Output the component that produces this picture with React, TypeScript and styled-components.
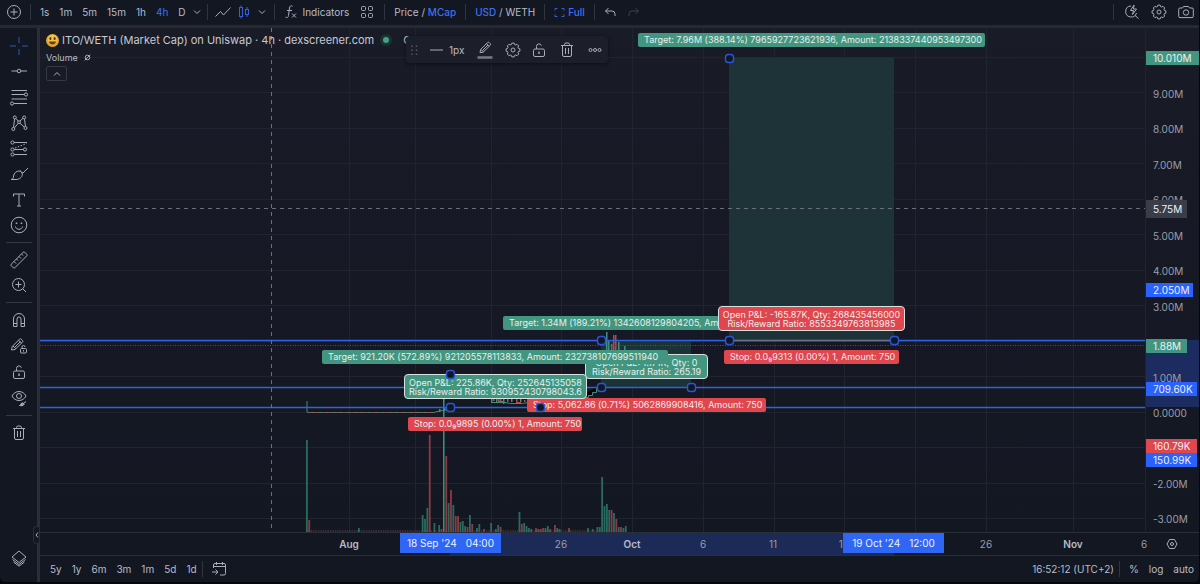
import React from "react";
import styled, { createGlobalStyle, css } from "styled-components";

const c = {
  bg: "#131722",
  line: "#2a2e39",
  text: "#b8bcc8",
  dim: "#9a9eaa",
  blue: "#2962ff",
  link: "#3f6ff0",
  green: "#42967f",
  red: "#e0464d",
};

const GlobalStyle = createGlobalStyle`
  * { box-sizing: border-box; }
  body {
    margin: 0;
    background: #05070c;
    color: ${c.text};
    font-family: Inter, "Liberation Sans", sans-serif;
    font-size: 10px;
  }
  button {
    margin: 0;
    padding: 0;
    border: 0;
    background: none;
    color: inherit;
    font: inherit;
    cursor: pointer;
  }
  svg { flex: none; }
`;

/* ---------- frame ---------- */

const Page = styled.div`
  display: flex;
  flex-direction: column;
  min-height: 100vh;
  padding: 0 1px 2px 0;
`;

const TopBar = styled.header`
  display: flex;
  align-items: flex-start;
  height: 28px;
  padding: 0 0 0 1px;
  background: ${c.bg};
  border-bottom: 3px solid #262932;
`;

const Body = styled.div`
  display: flex;
  flex: 1;
`;

const SideBar = styled.nav`
  position: relative;
  display: flex;
  flex-direction: column;
  flex: none;
  width: 40px;
  padding: 5px 0 11px;
  background: ${c.bg};
  border-right: 3px solid #2b2e38;
  border-bottom-left-radius: 5px;
`;

const Main = styled.main`
  display: flex;
  flex-direction: column;
  flex: 1;
  min-width: 0;
`;

const ChartGrid = styled.section`
  display: grid;
  grid-template-columns: 1fr 54px;
  grid-template-rows: 1fr 24px;
  flex: 1;
  background: linear-gradient(#191b27, #131722);
`;

const BottomBar = styled.footer`
  display: flex;
  align-items: center;
  height: 26px;
  padding: 0 0 0 5px;
  background: ${c.bg};
  border-bottom-right-radius: 5px;
`;

/* ---------- controls ---------- */

const BarButton = styled.button<{ $active?: boolean; $bold?: boolean }>`
  display: inline-flex;
  align-items: center;
  gap: ${(p) => (p.$bold ? 3 : 5)}px;
  height: 24px;
  padding: 0 5px;
  white-space: nowrap;
  font-size: 10px;
  font-weight: ${(p) => (p.$bold ? 500 : 400)};
  color: ${(p) => (p.$active ? c.link : c.text)};
  b {
    color: ${c.link};
    font-weight: 500;
  }
`;

const IconButton = styled.button<{ $w: number }>`
  display: flex;
  align-items: center;
  justify-content: center;
  flex: none;
  width: ${(p) => p.$w}px;
  height: 24px;
`;

const Divider = styled.span<{ $tight?: boolean }>`
  flex: none;
  width: 1px;
  height: 16px;
  margin: 0 4px 0 ${(p) => (p.$tight ? 0 : 4)}px;
  background: #30343f;
  ${TopBar} & {
    margin-top: 4px;
  }
`;

const Spacer = styled.span`
  flex: 1;
`;

const ToolGroup = styled.div<{ $h: number }>`
  display: flex;
  flex-direction: column;
  height: ${(p) => p.$h}px;
`;

const Tool = styled.button<{ $bottom?: boolean }>`
  display: flex;
  align-items: center;
  justify-content: center;
  flex: 1;
  width: 37px;
  ${(p) =>
    p.$bottom &&
    css`
      flex: none;
      height: 26px;
      margin-top: auto;
    `}
`;

const Rule = styled.hr`
  width: 26px;
  height: 1px;
  margin: 4px auto 4px 6px;
  border: 0;
  background: #343843;
`;

const CollapseTab = styled.button`
  position: absolute;
  right: -3px;
  bottom: 38px;
  width: 7px;
  height: 18px;
  background: ${c.bg};
  border: 1px solid #2b2e38;
  border-radius: 3px;
  display: flex;
  align-items: center;
  justify-content: center;
`;

/* ---------- chart ---------- */

const Pane = styled.div`
  position: relative;
  overflow: hidden;
  min-width: 0;
`;

const Plot = styled.svg`
  position: absolute;
  inset: 0;
  width: 100%;
  height: 100%;
`;

const Legend = styled.div`
  position: relative;
  padding: 4px 6px;
`;

const Title = styled.h1`
  display: flex;
  align-items: center;
  gap: 3px;
  height: 16px;
  margin: 0;
  font-size: 11px;
  font-weight: 400;
  color: #c6c9d2;
  white-space: nowrap;
`;

const Status = styled.span`
  width: 12px;
  height: 12px;
  margin: 0 8px 0 3px;
  border: 3px solid #18342f;
  border-radius: 50%;
  background: #4a9e88;
`;

const Study = styled.div`
  display: flex;
  align-items: center;
  gap: 6px;
  height: 18px;
  font-size: 9px;
`;

const Toggle = styled.button`
  display: flex;
  align-items: center;
  justify-content: center;
  width: 21px;
  height: 15px;
  border: 1px solid #343843;
  border-radius: 2px;
`;

const Floating = styled.div`
  position: absolute;
  left: 366px;
  top: 8px;
  display: flex;
  align-items: center;
  height: 27px;
  padding: 0 0 0 3px;
  background: #1c1f2a;
  border-radius: 4px;
  box-shadow: 0 1px 4px rgba(0, 0, 0, 0.5);
`;

const Tag = styled.div<{ $x: number; $y: number; $w: number; $tone: "green" | "red"; $boxed?: boolean }>`
  position: absolute;
  left: ${(p) => p.$x}px;
  top: ${(p) => p.$y}px;
  width: ${(p) => p.$w}px;
  padding: 0 6px;
  height: 14px;
  border-radius: 2px;
  background: ${(p) => c[p.$tone]};
  color: #e9eef0;
  font-size: 9px;
  line-height: 14px;
  white-space: nowrap;
  ${(p) =>
    p.$boxed &&
    css`
      height: 25px;
      padding: 3px 0;
      border: 1px solid #d9e2e0;
      border-radius: 4px;
      line-height: 9px;
      text-align: center;
    `}
`;

const PriceAxis = styled.div`
  position: relative;
  overflow: hidden;
  border-left: 1px solid #20242f;
`;

const PriceBand = styled.div`
  position: absolute;
  left: 0;
  right: 0;
  top: 312px;
  height: 67px;
  background: #1c2c60;
`;

const PriceTick = styled.span<{ $y: number }>`
  position: absolute;
  left: 7px;
  top: ${(p) => p.$y - 7}px;
  line-height: 14px;
  color: ${c.dim};
`;

const PriceTag = styled.span<{ $y: number; $bg: string; $w: number; $h?: number }>`
  position: absolute;
  left: 0;
  top: ${(p) => p.$y - (p.$h ?? 14) / 2}px;
  width: ${(p) => p.$w}px;
  height: ${(p) => p.$h ?? 14}px;
  padding-left: 7px;
  line-height: ${(p) => p.$h ?? 14}px;
  background: ${(p) => p.$bg};
  color: #eef1f6;
`;

const TimeAxis = styled.div`
  position: relative;
  z-index: 1;
  border-top: 1px solid ${c.line};
  border-bottom: 1px solid ${c.line};
  background: ${c.bg};
`;

const TimeBand = styled.div`
  position: absolute;
  left: 410px;
  top: 0;
  bottom: 0;
  width: 444px;
  background: #1c2a58;
`;

const TimeTick = styled.span<{ $x: number; $bold?: boolean }>`
  position: absolute;
  left: ${(p) => p.$x - 20}px;
  width: 40px;
  top: 0;
  line-height: 22px;
  text-align: center;
  color: ${(p) => (p.$bold ? c.text : c.dim)};
  font-weight: ${(p) => (p.$bold ? 600 : 400)};
`;

const TimeTag = styled.span<{ $x: number }>`
  position: absolute;
  left: ${(p) => p.$x}px;
  top: 0;
  display: flex;
  justify-content: center;
  gap: 9px;
  width: 101px;
  line-height: 20px;
  background: #2f66f5;
  color: #f0f3fa;
`;

const AxisCorner = styled.button`
  display: flex;
  align-items: center;
  justify-content: center;
  border-top: 1px solid ${c.line};
  border-bottom: 1px solid ${c.line};
  background: ${c.bg};
`;

/* ---------- icons ---------- */

const Svg = ({ w = 20, h = 20, color = "#a9adb9", children }: { w?: number; h?: number; color?: string; children: React.ReactNode }) => (
  <svg width={w} height={h} viewBox={`0 0 ${w} ${h}`} fill="none" stroke={color} strokeWidth={1} aria-hidden="true">
    {children}
  </svg>
);

const gearPath = (cx: number, cy: number, r: number) => {
  const pts: string[] = [];
  for (let i = 0; i < 8; i++) {
    [[-0.27, r - 1.3], [-0.17, r], [0.17, r], [0.27, r - 1.3]].forEach(([d, rad]) => {
      const a = (i * Math.PI) / 4 + d;
      pts.push(`${(cx + rad * Math.sin(a)).toFixed(2)} ${(cy - rad * Math.cos(a)).toFixed(2)}`);
    });
  }
  return `M${pts.join("L")}Z`;
};

const Gear = () => (
  <Svg w={16} h={16}>
    <path d={gearPath(8, 8, 7)} strokeLinejoin="round" />
    <circle cx="8" cy="8" r="2" />
  </Svg>
);

const Chevron = ({ up }: { up?: boolean }) => (
  <Svg w={8} h={6}>
    <path d={up ? "M1 4.5 4 1.5 7 4.5" : "M1 1.5 4 4.5 7 1.5"} />
  </Svg>
);

const Trash = () => (
  <Svg w={14} h={16}>
    <path d="M1 3.5h12M4.5 3.5v-1a1.5 1.5 0 0 1 1.5-1.500h2a1.5 1.5 0 0 1 1.5 1.500v1M2.500 3.500v9.500a1.5 1.5 0 0 0 1.500 1.500h6a1.5 1.5 0 0 0 1.500-1.500V3.500M5.500 6v6M8.500 6v6" />
  </Svg>
);

const Lock = () => (
  <Svg w={14} h={16}>
    <rect x="1.5" y="7" width="11" height="7.5" rx="1.5" />
    <path d="M4.500 7V4.500a2.500 2.500 0 0 1 4.900-.8" />
    <path d="M7 9.500v2.500" strokeWidth="1.4" />
  </Svg>
);

const drawTools: [string, React.ReactNode][] = [
  ["Cross", <Svg color="#2c56c4"><path d="M10 1v6M10 13v6M1 10h6M13 10h6" /></Svg>],
  ["Horizontal line", <Svg><path d="M2.500 10h5.500M12 10h6" /><circle cx="10" cy="10" r="1.8" /></Svg>],
  ["Fib retracement", <Svg><path d="M2.500 3.500h15.500M2.500 7.500h13M2.500 12h15.500M5 16.500h13" /><circle cx="17" cy="7.5" r="1.6" /><circle cx="3" cy="16.5" r="1.6" /></Svg>],
  ["XABCD pattern", <Svg><path d="M4.500 14.500 5.600 6M7 5.500l2.300 2.700M11 8l3-2.700M15.500 6l1 7.600M5.500 14.800 9.200 10.300M11 10.300 15.300 14" /><circle cx="5.8" cy="4.4" r="1.5" /><circle cx="15.2" cy="4.4" r="1.5" /><circle cx="10" cy="9.2" r="1.4" /><circle cx="4.3" cy="16" r="1.5" /><circle cx="16.5" cy="15" r="1.5" /></Svg>],
  ["Forecast", <Svg><path d="M5 4.500h13M5 11.500h9.500M5 16.500h13" /><path d="M6 10 17.500 5.500" strokeDasharray="1.5 1.5" /><circle cx="3.5" cy="4.5" r="1.6" /><circle cx="3.5" cy="11.5" r="1.6" /><circle cx="16" cy="11.5" r="1.6" /><circle cx="3.5" cy="16.5" r="1.6" /></Svg>],
  ["Brush", <Svg><path d="M2 15.500c2 0 2.300-1.500 2.600-3.500C5 9 7.500 7 10 7c2 0 3.300 1.500 3.300 3.300 0 3-3 5.200-6.300 5.200Z" /><path d="M11.500 6.500c.3 1.500 1 2.300 2.500 2.500L19 4" /></Svg>],
  ["Text", <Svg><path d="M4.500 6.500V4h11v2.500M10 4v12M8 16h4" /></Svg>],
  ["Emoji", <Svg><circle cx="10" cy="10" r="7.8" /><path d="M6.500 11.500c.5 3.700 6.500 3.700 7 0" /><path d="M7.500 7.500v1.500M12.500 7.500v1.500" strokeWidth="1.5" /></Svg>],
];

const Ruler = () => (
  <Svg><path d="M2.200 14.200 14.200 2.200a1 1 0 0 1 1.400 0l2.200 2.200a1 1 0 0 1 0 1.400L5.800 17.800a1 1 0 0 1-1.400 0l-2.200-2.200a1 1 0 0 1 0-1.400ZM5 11.500l2 2M7.500 9l1.500 1.500M10 6.500l2 2M12.500 4l1.500 1.500" /></Svg>
);
const ZoomIn = () => (
  <Svg><circle cx="9.5" cy="9.5" r="6" /><path d="m14 14 3 3M9.500 6.500v6M6.500 9.500h6" /></Svg>
);
const Magnet = () => (
  <Svg><path d="M4.500 16.500V9a5.500 5.500 0 0 1 11 0v7.500h-3.500V9a2 2 0 0 0-4 0v7.500ZM4.500 13.500h3.500M12 13.500h3.500" /></Svg>
);
const PencilLock = () => (
  <Svg><path d="m2.500 14 .7-3.500L10.500 3.200a1.200 1.200 0 0 1 1.700 0l1.300 1.300a1.200 1.200 0 0 1 0 1.700L6 13.500ZM4 10l2.700 2.700M5.500 11.500 11.500 5.500M9.500 4.200 12.500 7.200" /><rect x="11.5" y="12.5" width="6" height="4.5" rx="1" /><path d="M13 12.500V11a1.500 1.500 0 0 1 3 0M14.500 14v1.500" /></Svg>
);
const Eye = () => (
  <Svg><path d="M3 8c3-6 11-6 14 0-3 6-11 6-14 0Z" /><circle cx="10" cy="8" r="2.5" /><path d="M10.500 17.500c1 0 1-2 2.500-2.500 1.500-.3 2.500.8 2 1.500-.8 1.300-2.500 1.500-4.500 1ZM15 15l2-1.500" fill="#a9adb9" /></Svg>
);
const Layers = () => (
  <Svg><path d="M10 3 17 9l-7 5.500L3 9Z" /><path d="m3.500 11.500 6.500 5 6.500-5M4.500 14 10 18.200 15.500 14" /></Svg>
);

/* ---------- data, in plot coordinates ---------- */

const gridX = [309, 375, 451, 521, 592, 663, 734, 804, 875, 946, 1033];
const gridY = [30, 65, 101, 136, 172, 207, 243, 278, 314, 349, 385, 420, 456, 491];

/* [bar index, height, rising] */
const volume: [number, number, boolean][] = [
  [0, 92, true], [1, 12, false], [22, 4, true], [49, 17, true], [50, 13, true], [51, 24, true], [52, 97, false],
  [54, 9, true], [56, 7, true], [57, 3, false], [58, 134, true], [59, 76, false], [60, 29, true], [61, 42, false],
  [62, 27, true], [63, 16, false], [64, 16, false], [65, 10, true], [66, 11, true], [67, 6, true], [68, 5, false],
  [69, 17, true], [70, 8, false], [72, 4, true], [73, 8, true], [75, 3, false], [78, 9, true], [80, 3, true],
  [81, 7, true], [82, 5, false], [90, 20, true], [91, 8, false], [92, 9, true], [93, 6, true], [94, 4, true],
  [95, 3, true], [97, 4, false], [98, 3, true], [99, 3, false], [100, 4, false], [101, 4, true], [102, 6, true],
  [103, 3, false], [105, 7, false], [106, 4, true], [107, 3, true], [111, 4, false], [119, 4, true], [121, 3, true],
  [123, 5, true], [124, 5, true], [125, 55, true], [126, 26, true], [127, 28, true], [128, 22, true], [129, 22, false],
  [130, 19, true], [131, 13, false], [132, 5, true], [133, 5, false], [134, 4, true], [135, 6, true],
];
const barX = (i: number) => 266 + i * 2.362;

/* [x, high, low, rising] */
const candles: [number, number, number, boolean][] = [
  [399, 381, 384, true], [404, 379, 383, true], [409, 380, 382, false], [412, 378, 381, true],
  [451, 366, 375, true], [453, 367, 373, false], [456, 369, 374, true], [458, 367, 374, false], [460, 368, 375, false],
  [463, 370, 376, true], [467, 369, 374, false], [471, 371, 375, true], [476, 370, 375, false], [480, 371, 375, true],
  [484, 372, 375, false], [488, 371, 374, true], [519, 368, 374, true],
  [566, 304, 324, true], [568, 312, 324, true], [571, 316, 322, false], [573, 307, 322, false],
  [575, 307, 323, false], [578, 314, 323, true], [584, 318, 322, true],
];

const handles: [number, number][] = [
  [689, 30], [689, 312], [854, 312], [561, 312], [561, 359], [651, 359],
];
const topHandles: [number, number][] = [[410, 346], [410, 379], [500, 379]];

const Handle = ({ x, y }: { x: number; y: number }) => (
  <rect x={x - 3.5} y={y - 3.5} width={8} height={8} rx={2.8} fill="#131722" stroke="#2a55d8" strokeWidth={1.4} />
);

const TopHandles = styled(Plot)`
  pointer-events: none;
`;

const prices: [string, number][] = [
  ["9.00M", 66], ["8.00M", 101], ["7.00M", 137], ["6.00M", 172], ["5.00M", 208], ["4.00M", 243], ["3.00M", 279],
  ["1.00M", 350], ["0.0000", 385], ["-2.00M", 456], ["-3.00M", 491],
];

const times: [string, number, boolean][] = [
  ["Aug", 309, true], ["26", 521, false], ["Oct", 592, true], ["6", 663, false], ["11", 733, false],
  ["16", 804, false], ["26", 946, false], ["Nov", 1033, true], ["6", 1104, false],
];

export default function App() {
  return (
    <Page>
      <GlobalStyle />
      <TopBar>
        <IconButton $w={25} aria-label="Add"><Svg w={16} h={16}><circle cx="8" cy="8" r="6.5" /><path d="M8 4.500v7M4.500 8h7" /></Svg></IconButton>
        <Divider />
        {["1s", "1m", "5m", "15m", "1h", "4h", "D"].map((t) => (
          <BarButton key={t} $active={t === "4h"}>{t}</BarButton>
        ))}
        <IconButton $w={12} aria-label="More intervals"><Chevron /></IconButton>
        <Divider />
        <IconButton $w={22} aria-label="Line"><Svg w={16} h={12}><path d="m.5 10.500 5-5 3 3.500 7-7.500" /></Svg></IconButton>
        <IconButton $w={20} aria-label="Candles"><Svg w={12} h={14} color="#3460d8"><rect x="1.5" y="2.5" width="3" height="9" /><path d="M3 .5v2M3 11.500v2M9 2v2.500M9 9.500v2.500" /><rect x="7.5" y="4.5" width="3" height="5" /></Svg></IconButton>
        <IconButton $w={16} aria-label="Chart types"><Chevron /></IconButton>
        <Divider />
        <BarButton>
          <Svg w={14} h={16}><path d="M8.500 2.200C7 1.300 5.800 2 5.500 4L4.500 11.500C4.200 13.500 3 14 1.500 13.200M3 6.500h5M8 9.500l4 4M12 9.500l-4 4" /></Svg>
          Indicators
        </BarButton>
        <IconButton $w={26} aria-label="Templates"><Svg w={14} h={14}><rect x="1.5" y="1.5" width="4" height="4" rx="1" /><rect x="8.5" y="1.5" width="4" height="4" rx="1" /><rect x="1.5" y="8.5" width="4" height="4" rx="1" /><rect x="8.5" y="8.5" width="4" height="4" rx="1" /></Svg></IconButton>
        <Divider />
        <BarButton><span>Price / <b>MCap</b></span></BarButton>
        <Divider />
        <BarButton><span><b>USD</b> / WETH</span></BarButton>
        <Divider />
        <BarButton $active $bold>
          <Svg w={11} h={11} color="#3460d8"><path d="M1 3.500V1.500h2.500M7.500 1.500H10v2M10 7.500v2H7.500M3.500 9.500H1v-2" /></Svg>
          Full
        </BarButton>
        <Divider />
        <IconButton $w={22} aria-label="Undo"><Svg w={12} h={10}><path d="M4.500 1 1.500 4l3 3M1.500 4H8a3 3 0 0 1 3 3v2" /></Svg></IconButton>
        <IconButton $w={26} aria-label="Redo"><Svg w={12} h={10} color="#3d414c"><path d="m7.500 1 3 3-3 3M10.500 4H4a3 3 0 0 0-3 3v2" /></Svg></IconButton>
        <Spacer />
        <Divider $tight />
        <IconButton $w={27} aria-label="Quick search"><Svg w={16} h={16}><path d="M7 2A5.500 5.500 0 1 0 12.500 9M11 11.500l3.500 3M10 1 6.500 6.500h3L8.500 10.500 12.500 5h-3Z" /></Svg></IconButton>
        <IconButton $w={27} aria-label="Settings"><Gear /></IconButton>
        <IconButton $w={27} aria-label="Snapshot"><Svg w={16} h={14}><path d="M2 3h2.500l1-1.500h5l1 1.500H14a1.300 1.300 0 0 1 1.300 1.300v7A1.300 1.300 0 0 1 14 12.600H2A1.300 1.300 0 0 1 .7 11.300v-7A1.300 1.300 0 0 1 2 3Z" /><circle cx="8" cy="7.5" r="2.7" /></Svg></IconButton>
      </TopBar>

      <Body>
        <SideBar aria-label="Drawing tools">
          <ToolGroup $h={205}>
            {drawTools.map(([name, icon]) => <Tool key={name} aria-label={name}>{icon}</Tool>)}
          </ToolGroup>
          <Rule />
          <ToolGroup $h={51}>
            <Tool aria-label="Measure"><Ruler /></Tool>
            <Tool aria-label="Zoom in"><ZoomIn /></Tool>
          </ToolGroup>
          <Rule />
          <ToolGroup $h={104}>
            <Tool aria-label="Magnet"><Magnet /></Tool>
            <Tool aria-label="Stay in drawing mode"><PencilLock /></Tool>
            <Tool aria-label="Lock drawings"><Lock /></Tool>
            <Tool aria-label="Hide drawings"><Eye /></Tool>
          </ToolGroup>
          <Rule />
          <ToolGroup $h={26}>
            <Tool aria-label="Remove"><Trash /></Tool>
          </ToolGroup>
          <Tool $bottom aria-label="Object tree"><Layers /></Tool>
          <CollapseTab aria-label="Hide toolbar"><Svg w={4} h={8}><path d="M3 1.500 1 4l2 2.500" /></Svg></CollapseTab>
        </SideBar>

        <Main>
          <ChartGrid>
            <Pane>
              <Plot>
                <g stroke="#20242f">
                  {gridX.map((x) => <line key={x} x1={x + 0.5} x2={x + 0.5} y1="0" y2="100%" />)}
                  {gridY.map((y) => <line key={y} x1="0" x2="100%" y1={y - 0.5} y2={y - 0.5} />)}
                </g>
                <rect x="689" y="29.5" width="165" height="282" fill="#1e3338" />
                <rect x="561" y="312" width="90" height="47" fill="#1b3236" />
                <line x1="266" x2="585" y1="503" y2="503" stroke="#69424a" strokeDasharray="1.4 1" />
                {volume.map(([i, h, up]) => (
                  <rect key={i} x={barX(i)} y={504 - h} width="1.8" height={h} fill={up ? "#2b6b5f" : "#8c3a44"} />
                ))}
                <path d="M267 384V373" stroke="#3f8f7b" />
                <path d="M267 384.500h128" stroke="#8a5a58" strokeDasharray="5 2" />
                <path d="M267 384.500h128" stroke="#3f8f7b" strokeDasharray="2 5" strokeDashoffset="2" />
                <path d="M395 384l14-3 4-1" stroke="#3f8f7b" />
                <path d="M403.500 370v134" stroke="#3f8f7b" />
                {candles.map(([x, hi, lo, up]) => (
                  <rect key={x} x={x} y={hi} width="1.5" height={lo - hi} fill={up ? "#3f8f7b" : "#b5474e"} />
                ))}
                <path d="M451 374.500h14l6 1h10l8-1h16l6-1h8M519.500 374v-5" stroke="#3f8f7b" />
                <path d="M458 373.500h5M476 374.500h5M492 375h8" stroke="#b5474e" />
                <path d="M540 369.500h8.500v-2h4v-3h4v-4h5v-5" stroke="#3f8f7b" />
                <g stroke="#2f62e0" strokeWidth="1.5">
                  <line x1="0" x2="100%" y1="312.5" y2="312.5" />
                  <line x1="0" x2="100%" y1="359.5" y2="359.5" />
                  <line x1="0" x2="100%" y1="379.5" y2="379.5" />
                </g>
                <path d="M693 312.500h157" stroke="#6a6f8f" strokeWidth="1.5" />
                <line x1="0" x2="100%" y1="317.5" y2="317.5" stroke="#34605f" strokeDasharray="1 1.5" />
                <line x1="231.5" x2="231.5" y1="0" y2="100%" stroke="#6b6f79" strokeDasharray="4 4" />
                <line x1="0" x2="100%" y1="180.5" y2="180.5" stroke="#6b6f79" strokeDasharray="4 4" />
                {handles.map(([x, y]) => <Handle key={`${x}-${y}`} x={x} y={y} />)}
              </Plot>

              <Legend>
                <Title>
                  <svg width="13" height="13" viewBox="0 0 13 13" aria-hidden="true">
                    <circle cx="6.5" cy="6.5" r="6.5" fill="#e3a92f" />
                    <circle cx="6.5" cy="5.5" r="4.8" fill="#f0c24c" />
                    <ellipse cx="4.4" cy="4.6" rx="1" ry="1.5" fill="#4b3312" />
                    <ellipse cx="8.6" cy="4.6" rx="1" ry="1.5" fill="#4b3312" />
                    <path d="M3 7.500h7c-.3 4-6.700 4-7 0Z" fill="#6a3d12" />
                  </svg>
                  ITO/WETH (Market Cap) on Uniswap · 4h · dexscreener.com
                  <Status />
                  C
                </Title>
                <Study>Volume <Svg w={7} h={7}><circle cx="3.5" cy="3.5" r="2.3" /><path d="m.7 6.300 5.600-5.600" /></Svg></Study>
                <Toggle aria-label="Collapse legend"><Chevron up /></Toggle>
              </Legend>

              <Tag $x={598} $y={5} $w={347} $tone="green">Target: 7.96M (388.14%) 7965927723621936, Amount: 2138337440953497300</Tag>
              <Tag $x={463} $y={288} $w={285} $tone="green">Target: 1.34M (189.21%) 1342608129804205, Amount:</Tag>
              <Tag $x={487} $y={370} $w={239} $tone="red">Stop: 5,062.86 (0.71%) 5062869908416, Amount: 750</Tag>
              <Tag $x={545} $y={326} $w={123} $tone="green" $boxed>Open P&amp;L: 1.171K, Qty: 0<br />Risk/Reward Ratio: 265.19</Tag>
              <Tag $x={282} $y={322} $w={346} $tone="green">Target: 921.20K (572.89%) 921205578113833, Amount: 232738107699511940</Tag>
              <Tag $x={364} $y={346} $w={183} $tone="green" $boxed>Open P&amp;L: 225.86K, Qty: 252645135058<br />Risk/Reward Ratio: 930952430798043.6</Tag>
              <Tag $x={368} $y={389} $w={174} $tone="red">Stop: 0.0₉9895 (0.00%) 1, Amount: 750</Tag>
              <Tag $x={678} $y={278} $w={187} $tone="red" $boxed>Open P&amp;L: -165.87K, Qty: 268435456000<br />Risk/Reward Ratio: 8553349763813985</Tag>
              <Tag $x={684} $y={322} $w={175} $tone="red">Stop: 0.0₉9313 (0.00%) 1, Amount: 750</Tag>
              <TopHandles>
                {topHandles.map(([x, y]) => <Handle key={`${x}-${y}`} x={x} y={y} />)}
              </TopHandles>

              <Floating role="toolbar" aria-label="Line style">
                <Svg w={10} h={12} color="#555965"><path d="M3 1.500v10M7.500 1.500v10" strokeDasharray="1.5 2.5" strokeWidth="1.5" /></Svg>
                <BarButton><Svg w={20} h={4}><path d="M6 2h13" /></Svg>1px</BarButton>
                <IconButton $w={32} aria-label="Line colour"><Svg w={16} h={20}><path d="m3 12.500.6-3L10.500 2.600a1.200 1.200 0 0 1 1.700 0l1 1a1.200 1.200 0 0 1 0 1.700L6 12.300ZM4 9.500l2.300 2.300M5.500 10.500 11 5M9.500 3.700l2.500 2.500" /><path d="M.5 17.500h15" strokeWidth="2.5" stroke="#787b86" /></Svg></IconButton>
                <IconButton $w={24} aria-label="Settings"><Gear /></IconButton>
                <IconButton $w={28} aria-label="Lock"><Lock /></IconButton>
                <IconButton $w={28} aria-label="Remove"><Trash /></IconButton>
                <IconButton $w={27} aria-label="More"><Svg w={14} h={6}><circle cx="2.5" cy="3" r="1.5" /><circle cx="7" cy="3" r="1.5" /><circle cx="11.5" cy="3" r="1.5" /></Svg></IconButton>
              </Floating>
            </Pane>

            <PriceAxis>
              <PriceBand />
              {prices.map(([t, y]) => <PriceTick key={t} $y={y}>{t}</PriceTick>)}
              <PriceTag $y={30} $w={53} $bg={c.green}>10.010M</PriceTag>
              <PriceTag $y={181} $w={41} $h={18} $bg="#3a3d47">5.75M</PriceTag>
              <PriceTag $y={262} $w={47} $bg={c.blue}>2.050M</PriceTag>
              <PriceTag $y={318} $w={41} $bg={c.green}>1.88M</PriceTag>
              <PriceTag $y={361} $w={51} $bg={c.blue}>709.60K</PriceTag>
              <PriceTag $y={418} $w={51} $bg={c.red}>160.79K</PriceTag>
              <PriceTag $y={432} $w={51} $bg={c.blue}>150.99K</PriceTag>
            </PriceAxis>

            <TimeAxis>
              <TimeBand />
              {times.map(([t, x, b]) => <TimeTick key={x} $x={x} $bold={b}>{t}</TimeTick>)}
              <TimeTag $x={360}><span>18 Sep '24</span><span>04:00</span></TimeTag>
              <TimeTag $x={803}><span>19 Oct '24</span><span>12:00</span></TimeTag>
            </TimeAxis>
            <AxisCorner aria-label="Axis settings"><Svg w={12} h={12}><path d="M3.500 1.500h5L11 6l-2.500 4.500h-5L1 6Z" /><circle cx="6" cy="6" r="1.5" /></Svg></AxisCorner>
          </ChartGrid>

          <BottomBar>
            {["5y", "1y", "6m", "3m", "1m", "5d", "1d"].map((t) => <BarButton key={t}>{t}</BarButton>)}
            <Divider $tight />
            <IconButton $w={24} aria-label="Go to date"><Svg w={16} h={16}><path d="M2.500 7V4a1.500 1.500 0 0 1 1.500-1.500h9A1.500 1.500 0 0 1 14.500 4v8.500a1.500 1.500 0 0 1-1.500 1.500H9M2.500 5.500h12M5.500 1v3M11.500 1v3M1 11h5.500M4.500 8.500 7 11l-2.500 2.500" /></Svg></IconButton>
            <Spacer />
            <BarButton>16:52:12 (UTC+2)</BarButton>
            <Divider $tight />
            <BarButton>%</BarButton>
            <BarButton>log</BarButton>
            <BarButton>auto</BarButton>
          </BottomBar>
        </Main>
      </Body>
    </Page>
  );
}
